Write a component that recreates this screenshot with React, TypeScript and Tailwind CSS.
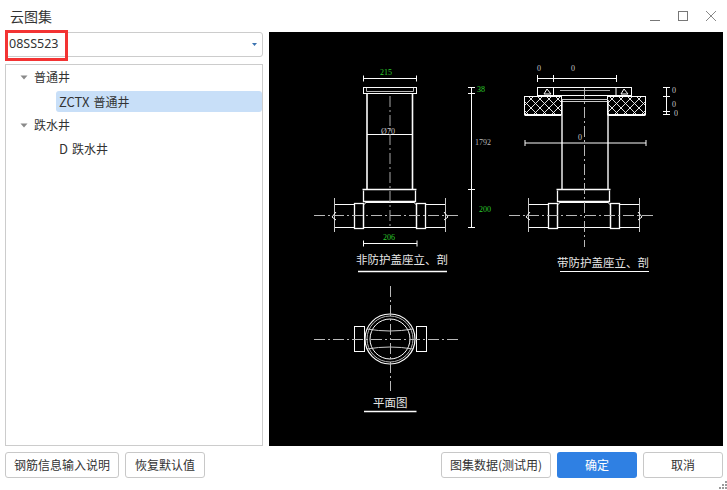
import React from "react";

const FONT = '"Noto Sans CJK SC", "Liberation Sans", sans-serif';

function Btn({ w, children, primary }: { w: string; children: React.ReactNode; primary?: boolean }) {
  return (
    <button
      className={
        primary
          ? `${w} h-[26px] rounded-[3px] bg-[#2f80e3] text-white text-[12px] leading-none flex items-center justify-center`
          : `${w} h-[26px] rounded-[3px] border border-[#c8c8c8] bg-white text-[#333] text-[12px] leading-none flex items-center justify-center`
      }
    >
      {children}
    </button>
  );
}

function Arrow() {
  return (
    <svg width="8" height="5" viewBox="0 0 8 5" className="shrink-0">
      <path d="M0.5 0.5H7.5L4 4.5Z" fill="#8a8a8a" />
    </svg>
  );
}

function Pipes({ cx }: { cx: number }) {
  const l = cx - 56;
  const r = cx + 56;
  return (
    <g>
      <path d={`M${cx - 26.5} 190.5V201.5H${cx + 25.5}V190.5`} strokeWidth="1.3" />
      <path d={`M${cx - 27.5} 189.5H${cx + 26.5}`} strokeWidth="1.6" />
      <path d={`M${cx - 25.5} 204.5L${cx - 24.5} 202.5H${cx + 24.5}L${cx + 25.5} 204.5`} />
      <path d={`M${cx - 26.5} 204.5V227.5H${cx + 26.5}V204.5`} strokeWidth="1.2" />
      <path d={`M${l + 0.5} 204.5H${l + 20.5}M${l + 0.5} 227.5H${l + 20.5}`} strokeWidth="1.2" />
      <path d={`M${r - 0.5} 204.5H${r - 20.5}M${r - 0.5} 227.5H${r - 20.5}`} strokeWidth="1.2" />
      <path d={`M${l + 0.5} 198V232M${r - 0.5} 198V232`} stroke="#ccc" />
      <rect x={l + 20.5} y="203.5" width="9" height="25" strokeWidth="1.3" />
      <rect x={r - 29.5} y="203.5" width="9" height="25" strokeWidth="1.3" />
      <path d={`M${l + 2} 212L${l - 2} 217L${l + 2} 220`} />
      <path d={`M${r - 2} 212L${r + 2} 217L${r - 2} 220`} />
    </g>
  );
}

function Dim({ x1, x2, y }: { x1: number; x2: number; y: number }) {
  return <path d={`M${x1} ${y}H${x2}M${x1} ${y - 3}V${y + 3}M${x2} ${y - 3}V${y + 3}`} />;
}

function Drawing() {
  const small = { fontSize: 8, fontFamily: '"Liberation Serif", serif', textAnchor: "middle" as const, stroke: "none" };
  const title = { fontSize: 11.5, fontFamily: '"Noto Sans CJK SC", serif', fill: "#e8e8e8", stroke: "none" };
  return (
    <svg viewBox="269 32 454 414" className="w-full h-full block opacity-[0.99]" fill="none" stroke="#fff" strokeWidth="1">
      <defs>
        <pattern id="hatch" width="9" height="9" patternUnits="userSpaceOnUse">
          <path d="M0 0L9 9M9 0L0 9" stroke="#fff" strokeWidth="0.9" />
        </pattern>
      </defs>

      {/* left elevation */}
      <Dim x1={363.5} x2={416.5} y={78.5} />
      <text x={386} y={75} fill="#2ecc2e" {...small}>215</text>
      <rect x={363.5} y={87.5} width={53} height={6} />
      <path d="M366.5 88V91.5H413.5V88" stroke="#bbb" />
      <path d="M367 93.5V189M412.5 93.5V189" strokeWidth="1.6" />
      <path d="M367 134.5H412.5" />
      <text x={388} y={134} fill="#ccc" {...small}>Ø70</text>
      <Pipes cx={390} />
      <path d="M390 96V227" stroke="#aaa" strokeDasharray="11 3 2 3" />
      <path d="M314 215.5H461" stroke="#bbb" strokeDasharray="11 3 2 3" />
      <Dim x1={363.5} x2={417} y={243.5} />
      <text x={389} y={240} fill="#2ecc2e" {...small}>206</text>
      <text x={356} y={264} {...title}>非防护盖座立、剖</text>
      <path d="M358 271.5H447" strokeWidth="1.6" />

      <path d="M471.5 88V227M468 87.5H475M468 93.5H475M468 189.5H475M468 227.5H475" />
      <text x={481} y={92} fill="#2ecc2e" {...small}>38</text>
      <text x={483} y={145} fill="#bbb" {...small}>1792</text>
      <text x={485} y={212} fill="#2ecc2e" {...small}>200</text>

      {/* right elevation */}
      <path d="M537.5 78.5H616.5M537.5 75V82M553.5 75V82M616.5 75V82" />
      <text x={539} y={71} fill="#ccc" {...small}>0</text>
      <text x={573} y={71} fill="#ccc" {...small}>0</text>
      <rect x={537.5} y={87.5} width={94} height={8} />
      <path d="M553.5 87.5V95.5M616 87.5V95.5" />
      <path d="M544 94L547 89L551 94Z M621 94L624 89L628 94Z" />
      <path d="M560 90.5H610" stroke="#aaa" />
      <rect x={524.5} y={96.5} width={37} height={18} fill="url(#hatch)" />
      <rect x={607.5} y={96.5} width={38} height={18} fill="url(#hatch)" />
      <path d="M524.5 115.5H561.5M607.5 115.5H645.5" />
      <path d="M561.5 99.5H608M561.5 101.5H608" stroke="#ccc" />
      <path d="M562 100V189M608 100V189" strokeWidth="1.4" />
      <Dim x1={525} x2={646} y={143} />
      <text x={580} y={140} fill="#ccc" {...small}>0</text>
      <Pipes cx={584} />
      <path d="M584.5 88V247" stroke="#bbb" strokeDasharray="11 3 2 3" />
      <path d="M509 215.5H655" stroke="#bbb" strokeDasharray="11 3 2 3" />
      <path d="M666.5 88V114M663 87.5H670M663 96.5H670M663 111.5H670M663 114.5H670" />
      <text x={674} y={93} fill="#ccc" {...small}>0</text>
      <text x={674} y={107} fill="#ccc" {...small}>0</text>
      <text x={676} y={116} fill="#ccc" {...small}>0</text>
      <text x={557} y={267} {...title}>带防护盖座立、剖</text>
      <path d="M560 271.5H649" strokeWidth="1.2" />

      {/* plan */}
      <circle cx={390} cy={339} r={25} strokeWidth="1.2" />
      <circle cx={390} cy={339} r={23} stroke="#bbb" />
      <circle cx={390} cy={339} r={20} />
      <path d="M367 329Q390 333 413 329M367 349Q390 345 413 349" stroke="#ccc" />
      <rect x={354.5} y={326.5} width={10} height={25} />
      <rect x={416.5} y={326.5} width={10} height={25} />
      <path d="M314 339.5H461" stroke="#bbb" strokeDasharray="11 3 2 3" />
      <path d="M390.5 286V391" stroke="#bbb" strokeDasharray="11 3 2 3" />
      <text x={373} y={407} {...title}>平面图</text>
      <path d="M364 411.5H416.5" strokeWidth="1.4" />
    </svg>
  );
}

export default function App() {
  return (
    <div className="w-[727px] h-[490px] bg-white flex flex-col relative overflow-hidden" style={{ fontFamily: FONT }}>
      <div className="h-[32px] shrink-0 flex items-center pl-[10px] pr-[11px]">
        <span className="text-[14px] text-[#333] leading-none">云图集</span>
        <div className="ml-auto flex items-center gap-[18px]">
          <svg width="10" height="10" viewBox="0 0 10 10"><path d="M0 9.5H10" stroke="#777" /></svg>
          <svg width="10" height="10" viewBox="0 0 10 10"><rect x="0.5" y="0.5" width="9" height="9" fill="none" stroke="#777" /></svg>
          <svg width="10" height="10" viewBox="0 0 10 10"><path d="M0 0L10 10M10 0L0 10" stroke="#888" /></svg>
        </div>
      </div>

      <div className="h-[414px] shrink-0 flex gap-[6px] pl-[5px] pr-[4px]">
        <div className="w-[258px] shrink-0 flex flex-col gap-[7px]">
          <div className="h-[25px] shrink-0 rounded-[3px] border border-[#ccc] flex items-center pl-[3px] pr-[5px]">
            <span className="text-[12.5px] text-[#333] leading-none" style={{ fontFamily: '"Noto Sans", "Noto Sans CJK SC", sans-serif' }}>08SS523</span>
            <svg width="5" height="3" viewBox="0 0 5 3" className="ml-auto"><path d="M0 0H5L2.5 3Z" fill="#3b73b0" /></svg>
          </div>
          <div className="flex-1 border border-[#ccc] text-[12px] text-[#333]">
            <div className="h-[24px] flex items-center pl-[14px] gap-[6px]"><Arrow /><span>普通井</span></div>
            <div className="h-[24px] pt-[2px] pb-[1px] pl-[50px]">
              <div className="h-full rounded-[3px] bg-[#c8dff8] flex items-center pl-[3px] gap-[4px]">
                <span className="text-[13px]">ZCTX</span>
                <span>普通井</span>
              </div>
            </div>
            <div className="h-[24px] flex items-center pl-[14px] gap-[6px]"><Arrow /><span>跌水井</span></div>
            <div className="h-[24px] flex items-center pl-[53px] gap-[4px]">
              <span className="text-[13px]">D</span>
              <span>跌水井</span>
            </div>
          </div>
        </div>
        <div className="flex-1 bg-black"><Drawing /></div>
      </div>

      <div className="mt-[6px] flex pl-[5px] pr-[4px]">
        <Btn w="w-[114px]">钢筋信息输入说明</Btn>
        <div className="ml-[6px]"><Btn w="w-[80px]">恢复默认值</Btn></div>
        <div className="ml-auto flex gap-[6px]">
          <Btn w="w-[110px]">图集数据(测试用)</Btn>
          <Btn w="w-[80px]" primary>确定</Btn>
          <Btn w="w-[80px]">取消</Btn>
        </div>
      </div>

      {/* annotation box */}
      <div className="absolute left-[5px] top-[30px] w-[63px] h-[31px] border-[3px] border-[#f33333] pointer-events-none" />

      {/* resize grip */}
      <svg width="8" height="8" viewBox="0 0 8 8" className="absolute right-0 bottom-[1px]">
        <path d="M6 0h2v2H6zM3 3h2v2H3zM6 3h2v2H6zM0 6h2v2H0zM3 6h2v2H3zM6 6h2v2H6z" fill="#9a9a9a" />
      </svg>
    </div>
  );
}
